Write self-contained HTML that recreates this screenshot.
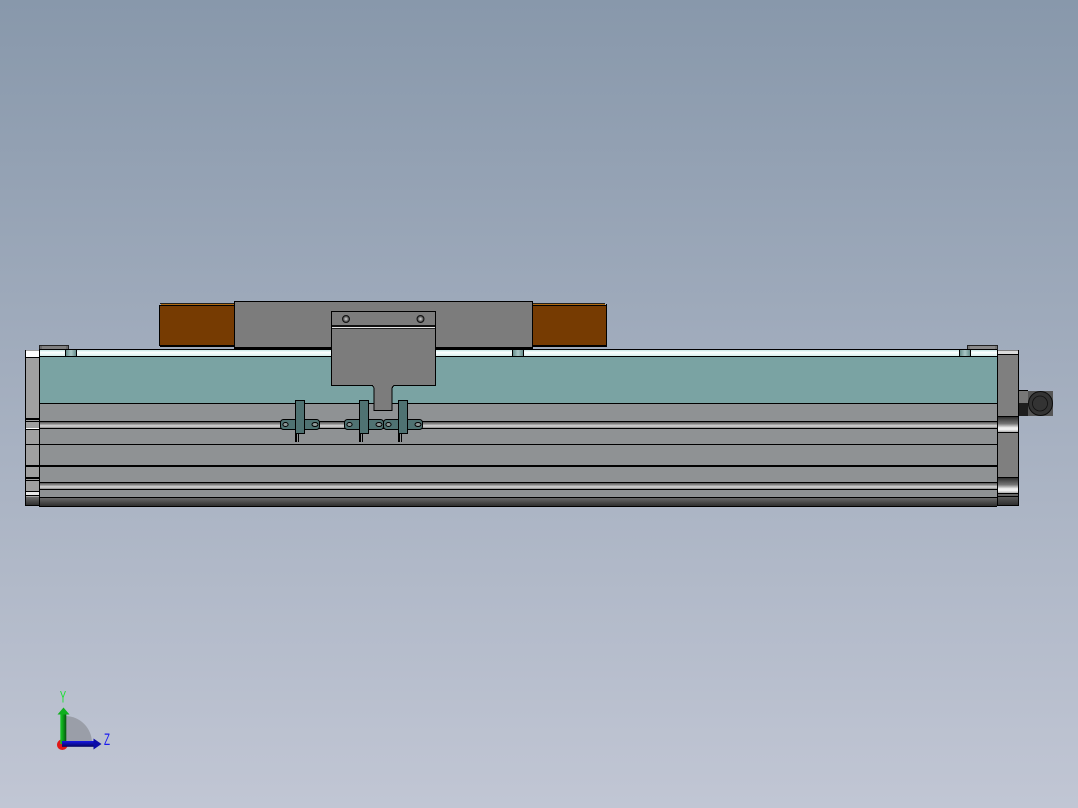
<!DOCTYPE html>
<html><head><meta charset="utf-8"><style>
html,body{margin:0;padding:0;width:1078px;height:808px;overflow:hidden;background:#a5aebd}
svg{display:block}
</style></head><body>
<svg width="1078" height="808" viewBox="0 0 1078 808" xmlns="http://www.w3.org/2000/svg">
<defs>
<linearGradient id="bg" x1="0" y1="0" x2="0" y2="1"><stop offset="0" stop-color="#8898ab"/><stop offset="1" stop-color="#c1c6d4"/></linearGradient>
<linearGradient id="bar" x1="0" y1="0" x2="0" y2="1"><stop offset="0" stop-color="#555"/><stop offset=".3" stop-color="#888"/><stop offset=".65" stop-color="#d8d8d8"/><stop offset="1" stop-color="#8a8a8a"/></linearGradient>
<linearGradient id="bot" x1="0" y1="0" x2="0" y2="1"><stop offset="0" stop-color="#6a6a6a"/><stop offset="1" stop-color="#2e2e2e"/></linearGradient>
<linearGradient id="wh" x1="0" y1="0" x2="0" y2="1"><stop offset="0" stop-color="#c8e8e6"/><stop offset=".4" stop-color="#fff"/><stop offset="1" stop-color="#d6f0ee"/></linearGradient>
<linearGradient id="tab" x1="0" y1="0" x2="1" y2="0"><stop offset="0" stop-color="#5f8785"/><stop offset=".5" stop-color="#a9c6c5"/><stop offset="1" stop-color="#5f8785"/></linearGradient>
<linearGradient id="cap" x1="0" y1="0" x2="0" y2="1"><stop offset="0" stop-color="#2e2e2e"/><stop offset=".45" stop-color="#777"/><stop offset=".72" stop-color="#f0f0f0"/><stop offset=".85" stop-color="#eee"/><stop offset="1" stop-color="#aaa"/></linearGradient>
<linearGradient id="gy" x1="0" y1="0" x2="1" y2="0"><stop offset="0" stop-color="#18cc28"/><stop offset=".5" stop-color="#0c9a18"/><stop offset="1" stop-color="#06520e"/></linearGradient>
<linearGradient id="bl" x1="0" y1="0" x2="0" y2="1"><stop offset="0" stop-color="#1818e6"/><stop offset="1" stop-color="#04045e"/></linearGradient>
<radialGradient id="scr"><stop offset="0" stop-color="#d8d8d8"/><stop offset=".45" stop-color="#888"/><stop offset="1" stop-color="#2a2a2a"/></radialGradient>
</defs>
<rect width="1078" height="808" fill="url(#bg)"/>

<g shape-rendering="crispEdges">
<!-- top clamps -->
<rect x="39.500" y="345.500" width="29" height="5" fill="#6a6a6a" stroke="#222"/>
<rect x="42" y="346" width="24" height="4" fill="#7f7f7f"/>
<rect x="967.500" y="345.500" width="30" height="5" fill="#777" stroke="#222"/>
<rect x="970" y="346" width="25" height="4" fill="#8a8a8a"/>

<!-- main body -->
<rect x="39" y="350" width="958" height="6" fill="url(#wh)"/>
<rect x="39" y="357" width="958" height="46" fill="#7aa3a3"/>
<rect x="39" y="404" width="958" height="17" fill="#8f9294"/>
<rect x="39" y="422" width="958" height="6" fill="url(#bar)"/>
<rect x="39" y="429" width="958" height="15" fill="#8f9294"/>
<rect x="39" y="445" width="958" height="20" fill="#8f9294"/>
<rect x="39" y="467" width="958" height="15" fill="#8f9294"/>
<rect x="39" y="483" width="958" height="6" fill="url(#bar)"/>
<rect x="39" y="490" width="958" height="7" fill="#8f9294"/>
<rect x="39" y="498" width="958" height="8" fill="url(#bot)"/>
<g fill="#000">
<rect x="39" y="349" width="958" height="1"/>
<rect x="39" y="356" width="958" height="1"/>
<rect x="39" y="403" width="958" height="1"/>
<rect x="39" y="421" width="958" height="1"/>
<rect x="39" y="428" width="958" height="1"/>
<rect x="39" y="444" width="958" height="1"/>
<rect x="39" y="465" width="958" height="2"/>
<rect x="39" y="482" width="958" height="1"/>
<rect x="39" y="489" width="958" height="1"/>
<rect x="39" y="497" width="958" height="1"/>
<rect x="39" y="506" width="958" height="1"/>
</g>

<!-- tabs -->
<rect x="65.500" y="349.500" width="11" height="7" fill="url(#tab)" stroke="#000"/>
<rect x="512.500" y="349.500" width="11" height="7" fill="url(#tab)" stroke="#000"/>
<rect x="959.500" y="349.500" width="11" height="7" fill="url(#tab)" stroke="#000"/>

<!-- left cap -->
<rect x="25" y="350" width="14" height="155" fill="#a0a0a0"/>
<rect x="26" y="351" width="13" height="6" fill="#fff"/>
<g fill="#000">
<rect x="25" y="357" width="14" height="1"/>
<rect x="25" y="418" width="14" height="2"/>
<rect x="25" y="421" width="14" height="1"/>
<rect x="25" y="429" width="14" height="1"/>
<rect x="25" y="444" width="14" height="1"/>
<rect x="25" y="465" width="14" height="2"/>
<rect x="25" y="477" width="14" height="2"/>
<rect x="25" y="480" width="14" height="1"/>
<rect x="25" y="491" width="14" height="1"/>
<rect x="25" y="495" width="14" height="1"/>
</g>
<rect x="26" y="428" width="13" height="1" fill="#fff"/>
<rect x="26" y="492" width="13" height="3" fill="#e8e8e8"/>
<rect x="26" y="497" width="13" height="8" fill="url(#bot)"/>
<rect x="25" y="350" width="1" height="156" fill="#000"/>
<rect x="39" y="350" width="1" height="157" fill="#000"/>
<rect x="25" y="505" width="14" height="1" fill="#000"/>

<!-- right cap -->
<rect x="997" y="350" width="21" height="155" fill="#7f7f7f"/>
<rect x="998" y="351" width="20" height="3" fill="#dcdcdc"/>
<rect x="997" y="354" width="21" height="1" fill="#000"/>
<rect x="998" y="417" width="20" height="15" fill="url(#cap)"/>
<rect x="997" y="416" width="21" height="1" fill="#000"/>
<rect x="997" y="432" width="21" height="1" fill="#000"/>
<rect x="998" y="478" width="20" height="15" fill="url(#cap)"/>
<rect x="997" y="477" width="21" height="1" fill="#000"/>
<rect x="997" y="493" width="21" height="1" fill="#000"/>
<rect x="998" y="494" width="20" height="11" fill="url(#bot)"/>
<rect x="997" y="496" width="21" height="1" fill="#000"/>
<rect x="997" y="505" width="22" height="1" fill="#000"/>
<rect x="997" y="350" width="1" height="156" fill="#000"/>
<rect x="1018" y="350" width="1" height="156" fill="#000"/>

<!-- motor -->
<rect x="1019" y="390" width="9" height="13" fill="#777"/>
<rect x="1019" y="403" width="9" height="13" fill="#1e1e1e"/>
<rect x="1019" y="390" width="9" height="1" fill="#000"/>
<rect x="1028" y="391" width="25" height="25" fill="#555"/>

<!-- brown blocks -->
<rect x="161" y="303" width="74" height="2" fill="#b06a10"/>
<rect x="160" y="305" width="75" height="41" fill="#763b02"/>
<rect x="160" y="303" width="75" height="1" fill="#222"/>
<rect x="160" y="305" width="75" height="1" fill="#000"/>
<rect x="159" y="305" width="1" height="41" fill="#000"/>
<rect x="160" y="345" width="75" height="2" fill="#000"/>
<rect x="532" y="303" width="73" height="2" fill="#b06a10"/>
<rect x="532" y="305" width="74" height="41" fill="#763b02"/>
<rect x="532" y="303" width="73" height="1" fill="#222"/>
<rect x="532" y="305" width="74" height="1" fill="#000"/>
<rect x="606" y="304" width="1" height="43" fill="#000"/>
<rect x="532" y="345" width="75" height="2" fill="#000"/>

<!-- carriage -->
<rect x="234.500" y="301.500" width="298" height="47" fill="#7c7c7c" stroke="#000"/>
<rect x="235" y="347" width="297" height="1" fill="#000"/>
</g>

<!-- plate -->
<path d="M331.500 311.500H435.500V385.500H394L392.500 387V387.500L392 388V410.500H374V388L372.500 385.500H331.500Z" fill="#7c7c7c" stroke="#000" shape-rendering="crispEdges"/>
<g shape-rendering="crispEdges">
<rect x="332" y="325" width="103" height="2" fill="#111"/>
<rect x="332" y="327" width="103" height="1" fill="#e2e2e2"/>
<rect x="332" y="328" width="103" height="1" fill="#222"/>
</g>
<circle cx="346" cy="319" r="3.500" fill="url(#scr)" stroke="#111"/>
<circle cx="420.500" cy="319" r="3.500" fill="url(#scr)" stroke="#111"/>

<!-- sensors -->
<g stroke="#000" fill="#4f7272">
<rect x="280.500" y="419.500" width="39" height="10" rx="3"/>
<rect x="344.500" y="419.500" width="39" height="10" rx="3"/>
<rect x="383.500" y="419.500" width="39" height="10" rx="3"/>
</g>
<g fill="#8f9a9a" stroke="#000">
<ellipse cx="285.500" cy="424.500" rx="2.600" ry="2"/><ellipse cx="315" cy="424.500" rx="3" ry="2"/>
<ellipse cx="349.500" cy="424.500" rx="2.600" ry="2"/><ellipse cx="379" cy="424.500" rx="3" ry="2"/>
<ellipse cx="388.500" cy="424.500" rx="2.600" ry="2"/><ellipse cx="418" cy="424.500" rx="3" ry="2"/>
</g>
<g shape-rendering="crispEdges">
<rect x="295.500" y="400.500" width="9" height="33" fill="#4f7272" stroke="#000"/>
<rect x="359.500" y="400.500" width="9" height="33" fill="#4f7272" stroke="#000"/>
<rect x="398.500" y="400.500" width="9" height="33" fill="#4f7272" stroke="#000"/>
<path d="M295 434h2v8h-2zM298 434h1v8h-1zM359 434h2v8h-2zM362 434h1v8h-1zM398 434h2v8h-2zM401 434h1v8h-1z" fill="#000"/>
</g>

<!-- motor circle -->
<circle cx="1040.500" cy="403.500" r="12" fill="#333" stroke="#0c0c0c"/>
<circle cx="1040" cy="403.500" r="7.500" fill="#333" stroke="#111" stroke-width=".8"/>

<!-- triad -->
<path d="M65 716A27 27 0 0 1 92 743H65Z" fill="#9a9ea8"/>
<circle cx="62.300" cy="744.700" r="5.300" fill="#e01818"/>
<rect x="60.300" y="714" width="6" height="30" fill="url(#gy)"/>
<path d="M63.500 707.500L69.500 714.500H57.500Z" fill="#0fb01e"/>
<rect x="62" y="741" width="33" height="5.800" fill="url(#bl)"/>
<path d="M101.500 744L93.500 738.500V749.500Z" fill="#0c0ca8"/>
<text transform="translate(63,702.500) scale(.55,1)" font-family="'Liberation Sans',sans-serif" font-size="17" fill="#19e030" text-anchor="middle">Y</text>
<text transform="translate(107,745) scale(.58,1)" font-family="'Liberation Sans',sans-serif" font-size="17" fill="#1a1af0" text-anchor="middle">Z</text>
</svg>
</body></html>
